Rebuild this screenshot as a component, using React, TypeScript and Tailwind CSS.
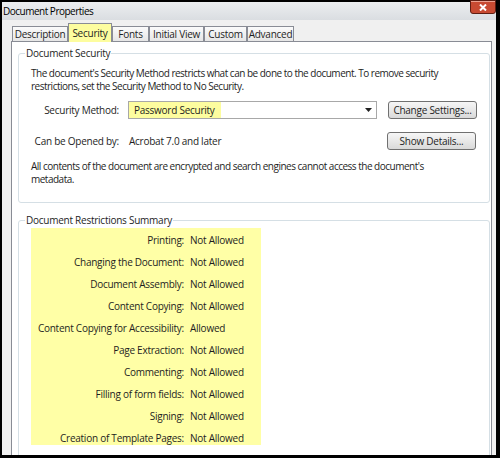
const restrictions: [string, string][] = [
  ["Printing:", "Not Allowed"],
  ["Changing the Document:", "Not Allowed"],
  ["Document Assembly:", "Not Allowed"],
  ["Content Copying:", "Not Allowed"],
  ["Content Copying for Accessibility:", "Allowed"],
  ["Page Extraction:", "Not Allowed"],
  ["Commenting:", "Not Allowed"],
  ["Filling of form fields:", "Not Allowed"],
  ["Signing:", "Not Allowed"],
  ["Creation of Template Pages:", "Not Allowed"],
]

const tabs = [
  { label: "Description", w: "w-[56px]" },
  { label: "Security", w: "w-[44px]", active: true },
  { label: "Fonts", w: "w-[37px]" },
  { label: "Initial View", w: "w-[55px]" },
  { label: "Custom", w: "w-[43px]" },
  { label: "Advanced", w: "w-[47px]" },
]

const Button = ({ children }: { children: string }) => (
  <button className="h-[18px] w-[89px] rounded-[3px] border border-[#707070] bg-linear-to-b from-[#f6f6f6] via-[#e8e8e8] to-[#d9d9d9] text-center leading-[16px] text-[#1e1e1e]">
    {children}
  </button>
)

export default function App() {
  return (
    <div
      className="h-[458px] w-[500px] overflow-hidden bg-black pb-[3px] pl-[2px] pr-[4px] pt-[2px] text-[10px] tracking-[-0.25px] text-[#1e1e1e]"
      style={{ fontFamily: "'Open Sans', 'Noto Sans', sans-serif" }}
    >
      <div className="flex h-full flex-col bg-[#f0f0f0]">
        {/* title bar */}
        <div className="relative z-10 flex h-[18px] shrink-0 items-start bg-linear-to-b from-[#eceef0] to-[#dadde1]">
          <span className="flex-1 pl-[1px] pt-[2px] leading-[14px] tracking-[-0.5px] text-black">Document Properties</span>
          <button className="relative z-20 -mt-[2px] flex h-[14px] w-[26px] shrink-0 items-center justify-center rounded-b-[3px] border border-[#5e1d12] bg-[#c84a32] shadow-[inset_0_1px_0_#eaa08f]">
            <svg width="8" height="7" viewBox="0 0 8 7">
              <path d="M1 0.5l6 6M7 0.5l-6 6" stroke="white" strokeWidth="2" />
            </svg>
          </button>
        </div>

        {/* tabs */}
        <div className="flex h-[21px] shrink-0 items-end pl-[10px]">
          {tabs.map((t) =>
            t.active ? (
              <div
                key={t.label}
                className={`${t.w} relative z-10 -mb-px flex h-[19px] items-center justify-center border border-b-0 border-[#898c95] bg-[#fdfd9f] leading-none`}
              >
                {t.label}
              </div>
            ) : (
              <div
                key={t.label}
                className={`${t.w} flex h-[15px] items-center justify-center border border-b-0 border-[#898c95] bg-linear-to-b from-[#fbfbfb] to-[#e6e6e6] leading-none`}
              >
                {t.label}
              </div>
            ),
          )}
        </div>

        {/* tab panel */}
        <div className="ml-[9px] mr-[4px] flex-1 overflow-hidden border border-b-0 border-[#898c95] bg-white pl-[6px] pr-[1px]">
          {/* Document Security */}
          <div className="mt-[11px] rounded-[3px] border border-[#d5dfe5] pb-[16px] pl-[12px] pr-[10px]">
            <div className="-mt-[8px] -ml-[6px] w-fit bg-white px-[1px] leading-[14px]">Document Security</div>
            <p className="mt-[7px] leading-[13px] tracking-[-0.5px]">
              The document's Security Method restricts what can be done to the document. To remove security
              <br />
              restrictions, set the Security Method to No Security.
            </p>
            <div className="-ml-[12px] mt-[8px] flex items-center">
              <span className="w-[100px] text-right">Security Method:</span>
              <div className="ml-[9px] flex h-[18px] w-[249px] items-center justify-between border border-[#a8a8a8] bg-white">
                <span className="flex h-full items-center whitespace-nowrap bg-[#fdfd9f] pl-[5px] pr-[6px]">Password Security</span>
                <svg width="7" height="4" viewBox="0 0 7 4" className="mr-[4px]">
                  <path d="M0 0h7L3.5 4z" fill="#222" />
                </svg>
              </div>
              <div className="ml-[11px]">
                <Button>Change Settings...</Button>
              </div>
            </div>
            <div className="-ml-[12px] mt-[13px] flex items-center">
              <span className="w-[100px] text-right">Can be Opened by:</span>
              <span className="ml-[10px] w-[258px]">Acrobat 7.0 and later</span>
              <Button>Show Details...</Button>
            </div>
            <p className="mt-[10px] leading-[13px] tracking-[-0.5px]">
              All contents of the document are encrypted and search engines cannot access the document's
              <br />
              metadata.
            </p>
          </div>

          {/* Document Restrictions Summary */}
          <div className="mt-[17px] h-[260px] rounded-[3px] border border-[#d5dfe5] pl-[12px]">
            <div className="-mt-[8px] -ml-[6px] w-fit bg-white px-[1px] leading-[14px]">Document Restrictions Summary</div>
            <div className="mt-[1px] h-[217px] w-[230px] overflow-hidden bg-[#ffffa6] pt-[1px]">
              {restrictions.map(([label, value]) => (
                <div key={label} className="flex h-[22px] items-center">
                  <span className="w-[153px] text-right">{label}</span>
                  <span className="ml-[6px]">{value}</span>
                </div>
              ))}
            </div>
          </div>
        </div>
      </div>
    </div>
  )
}
